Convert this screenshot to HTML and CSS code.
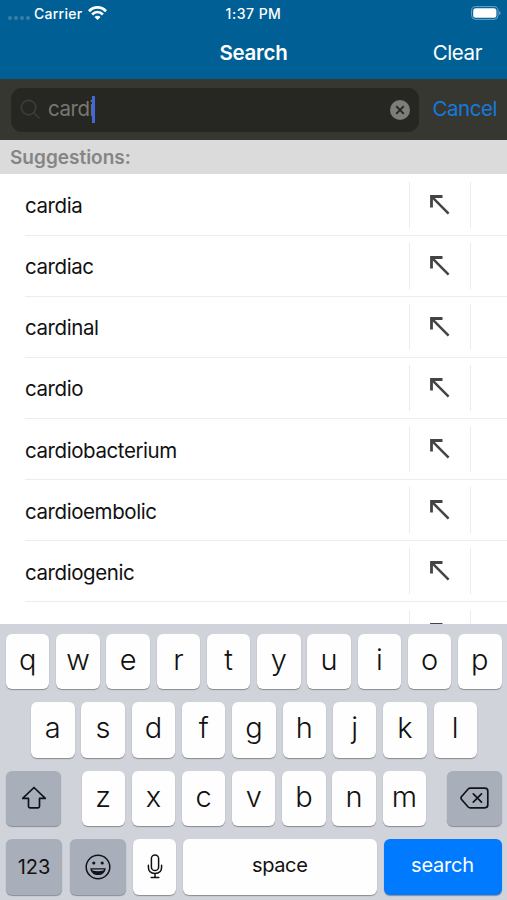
FILE: index.html
```html
<!DOCTYPE html>
<html lang="en">
<head>
  <meta charset="UTF-8">
  <meta name="viewport" content="width=device-width, initial-scale=1.0">
  <title>Search</title>
  <link rel="stylesheet" href="styles.css">
</head>
<body>
  <svg class="symbols" aria-hidden="true">
    <symbol id="arrow" viewBox="0 0 20 20">
      <path d="M1.5 12.5V1.5H12.5" fill="none" stroke="#444" stroke-width="2.8"/>
      <path d="M1.7 1.7L18.6 18.6" fill="none" stroke="#444" stroke-width="2.5"/>
    </symbol>
  </svg>

  <div class="app">
    <header class="top">
      <div class="status">
        <div class="status-left">
          <span class="dots"><i></i><i></i><i></i><i></i></span>
          <span class="carrier">Carrier</span>
          <svg class="wifi" width="19" height="14" viewBox="0 0 19 14">
            <g fill="none" stroke="#fff" stroke-width="2.7">
              <path d="M1 5.2C5.8.2 13.2.2 18 5.2"/>
              <path d="M4.1 8.5C7.3 5.4 11.7 5.4 14.9 8.5"/>
            </g>
            <path d="M6.5 10.9C8.3 9.3 10.7 9.3 12.5 10.9L9.5 13.9Z" fill="#fff"/>
          </svg>
        </div>
        <div class="time">1:37 PM</div>
        <div class="status-right">
          <svg width="30" height="15" viewBox="0 0 30 15">
            <rect x=".6" y=".6" width="26.4" height="12.8" rx="4" fill="none" stroke="#70a4c4" stroke-width="1"/>
            <rect x="2.2" y="2.2" width="23.2" height="9.6" rx="2.5" fill="#fff"/>
            <path d="M28.2 5V9.2Q29.6 8.5 29.6 7.1T28.2 5" fill="#70a4c4"/>
          </svg>
        </div>
      </div>
      <div class="nav">
        <h1>Search</h1>
        <span class="clear">Clear</span>
      </div>
    </header>

    <div class="search-bar">
      <div class="field">
        <svg class="glass" width="21" height="21" viewBox="0 0 21 21" fill="none" stroke="#3b3c39" stroke-width="1.7">
          <circle cx="8.6" cy="8.6" r="7.2"/>
          <path d="M13.8 13.8L19.5 19.5"/>
        </svg>
        <span class="query">cardi</span><span class="caret"></span>
        <svg class="delete" width="20" height="20" viewBox="0 0 20 20">
          <circle cx="10" cy="10" r="10" fill="#7d7e7b"/>
          <path d="M6.2 6.2L13.8 13.8M13.8 6.2L6.2 13.8" stroke="#262722" stroke-width="1.9"/>
        </svg>
      </div>
      <span class="cancel">Cancel</span>
    </div>

    <h2 class="section-title">Suggestions:</h2>

    <ul class="list">
      <li><span class="word">cardia</span><span class="fill"><svg><use href="#arrow"/></svg></span></li>
      <li><span class="word">cardiac</span><span class="fill"><svg><use href="#arrow"/></svg></span></li>
      <li><span class="word">cardinal</span><span class="fill"><svg><use href="#arrow"/></svg></span></li>
      <li><span class="word">cardio</span><span class="fill"><svg><use href="#arrow"/></svg></span></li>
      <li><span class="word">cardiobacterium</span><span class="fill"><svg><use href="#arrow"/></svg></span></li>
      <li><span class="word">cardioembolic</span><span class="fill"><svg><use href="#arrow"/></svg></span></li>
      <li><span class="word">cardiogenic</span><span class="fill"><svg><use href="#arrow"/></svg></span></li>
      <li><span class="word"></span><span class="fill"><svg><use href="#arrow"/></svg></span></li>
    </ul>

    <div class="keyboard">
      <div class="keys">
        <b>q</b><b>w</b><b>e</b><b>r</b><b>t</b><b>y</b><b>u</b><b>i</b><b>o</b><b>p</b>
      </div>
      <div class="keys keys-middle">
        <b>a</b><b>s</b><b>d</b><b>f</b><b>g</b><b>h</b><b>j</b><b>k</b><b>l</b>
      </div>
      <div class="keys keys-third">
        <b class="dark side">
          <svg width="26" height="24" viewBox="0 0 26 24" fill="none" stroke="#111318" stroke-width="1.7" stroke-linejoin="round">
            <path d="M13 1.5L24.3 12.4H18.5V20.3Q18.5 21.8 17 21.8H9Q7.5 21.8 7.5 20.3V12.4H1.7Z"/>
          </svg>
        </b>
        <div class="letters"><b>z</b><b>x</b><b>c</b><b>v</b><b>b</b><b>n</b><b>m</b></div>
        <b class="dark side">
          <svg width="29" height="22" viewBox="0 0 29 22" fill="none" stroke="#111318" stroke-width="1.7" stroke-linejoin="round" stroke-linecap="round">
            <path d="M10.2 1.2H24.8Q27.8 1.2 27.8 4.2V17.8Q27.8 20.8 24.8 20.8H10.2Q9 20.8 8.2 20L1.4 12.2Q.6 11 1.4 9.8L8.2 2Q9 1.2 10.2 1.2Z"/>
            <path d="M13.3 6.8L21.5 15.2M21.5 6.8L13.3 15.2"/>
          </svg>
        </b>
      </div>
      <div class="keys keys-bottom">
        <b class="dark numbers">123</b>
        <b class="dark emoji">
          <svg width="26" height="26" viewBox="0 0 26 26">
            <circle cx="13" cy="13" r="11.8" fill="none" stroke="#111318" stroke-width="1.5"/>
            <circle cx="8.8" cy="9" r="1.6" fill="#111318"/>
            <circle cx="17.2" cy="9" r="1.6" fill="#111318"/>
            <path d="M5.2 14.2H20.8C20.3 18.6 17.2 21.1 13 21.1S5.7 18.6 5.2 14.2Z" fill="#111318"/>
            <path d="M7 15.4H19L18.5 16.6Q13 17.8 7.5 16.6Z" fill="#a9afba"/>
          </svg>
        </b>
        <b class="mic">
          <svg width="16" height="25" viewBox="0 0 16 25" fill="none" stroke="#111" stroke-width="1.5" stroke-linecap="round">
            <rect x="4.4" y="1" width="7.2" height="15.5" rx="3.6"/>
            <path d="M1.4 11.3V13.2C1.4 17 4 19.4 8 19.4S14.6 17 14.6 13.2V11.3M8 19.4V23.2M4.2 23.4H11.8"/>
          </svg>
        </b>
        <b class="space">space</b>
        <b class="go">search</b>
      </div>
    </div>
  </div>
</body>
</html>
```
FILE: styles.css
```css
* { box-sizing: border-box; }
body {
  margin: 0;
  font-family: Inter, "Liberation Sans", sans-serif;
  background: #fff;
  color: #111;
}
.symbols { display: none; }
.app {
  width: 507px;
  height: 900px;
  display: flex;
  flex-direction: column;
  overflow: hidden;
}

/* Status and title */
.top {
  height: 79px;
  background: #006095;
  color: #fff;
}
.status {
  height: 26px;
  display: grid;
  grid-template-columns: 1fr auto 1fr;
  align-items: center;
  padding: 0 6px 0 8px;
  font-size: 14px;
  font-weight: 500;
}
.status-left { display: flex; align-items: center; }
.status-right { display: flex; justify-content: flex-end; }
.dots { display: flex; gap: 2px; padding-top: 9px; }
.dots i { width: 4px; height: 4px; border-radius: 50%; background: #397fa9; }
.carrier { margin: 0 6px 0 4px; letter-spacing: 0.25px; }
.time { margin-right: 2px; letter-spacing: 0.5px; }
.nav {
  height: 53px;
  display: grid;
  grid-template-columns: 1fr auto 1fr;
  align-items: center;
}
.nav h1 {
  grid-column: 2;
  margin: 0;
  font-size: 20.5px;
  font-weight: 600;
  letter-spacing: -0.25px;
}
.clear {
  justify-self: end;
  padding-right: 25px;
  font-size: 20.5px;
  letter-spacing: -0.4px;
}

/* Search bar */
.search-bar {
  height: 61px;
  display: flex;
  align-items: center;
  padding: 0 10px 0 11px;
  background: #373732;
  font-size: 20.5px;
  letter-spacing: -0.45px;
}
.field {
  width: 408px;
  height: 44px;
  display: flex;
  align-items: center;
  padding: 0 9px 0 9px;
  border-radius: 11px;
  background: #262722;
}
.glass { margin-right: 7px; }
.query { color: #777874; }
.query, .cancel { padding-bottom: 2px; }
.caret { width: 3px; height: 27px; margin-left: -2px; background: #4467d8; }
.delete { margin-left: auto; }
.cancel { margin-left: auto; color: #147add; }

.section-title {
  height: 34px;
  margin: 0;
  padding: 1px 0 0 10px;
  background: #dbdbdb;
  color: #858585;
  font-size: 19px;
  font-weight: 600;
  line-height: 34px;
}

/* Suggestions */
.list {
  height: 450px;
  margin: 0;
  padding: 0.5px 0 0 25px;
  overflow: hidden;
  list-style: none;
  font-size: 20.5px;
  letter-spacing: -0.42px;
}
.list li {
  height: 61.15px;
  display: flex;
  align-items: center;
  border-bottom: 1.5px solid #ececec;
}
.word { flex: 1; padding-top: 2px; }
.fill {
  width: 62px;
  height: 46px;
  display: flex;
  align-items: center;
  justify-content: center;
  margin-right: 36px;
  border: solid #ececec;
  border-width: 0 1px;
}
.fill svg { width: 20px; height: 20px; margin-right: 1px; }

/* Keyboard */
.keyboard {
  flex: 1;
  display: flex;
  flex-direction: column;
  gap: 13px;
  padding: 9.5px 5.5px 0 6px;
  background: #d0d3da;
}
.keys, .letters { display: flex; gap: 6.8px; }
.keys b {
  flex: 1;
  height: 55.5px;
  display: flex;
  align-items: center;
  justify-content: center;
  padding-bottom: 4px;
  border-radius: 6px;
  background: #fefefe;
  box-shadow: 0 1px 1px #898b90;
  font-size: 29px;
  font-weight: 350;
}
.keys-middle { padding: 0 24.5px 0 25px; }
.keys-third { gap: 0; justify-content: space-between; }
.letters { width: 344.5px; }
.keys .side { flex: 0 0 55px; padding-bottom: 0; }
.keys .dark { background: #a9afba; }
.keys-bottom { gap: 7px; }
.keys .numbers { flex: 0 0 56px; font-size: 20px; font-weight: 400; padding: 0; }
.keys .emoji { flex: 0 0 56px; margin-left: 1px; padding: 0; }
.keys .mic { flex: 0 0 43px; padding: 0; }
.keys .space, .keys .go { font-size: 20px; font-weight: 400; letter-spacing: -0.4px; }
.keys .go { letter-spacing: -0.2px; }
.keys .space { flex: 0 0 193.5px; }
.keys .go { background: #007aff; color: #fff; }
```
